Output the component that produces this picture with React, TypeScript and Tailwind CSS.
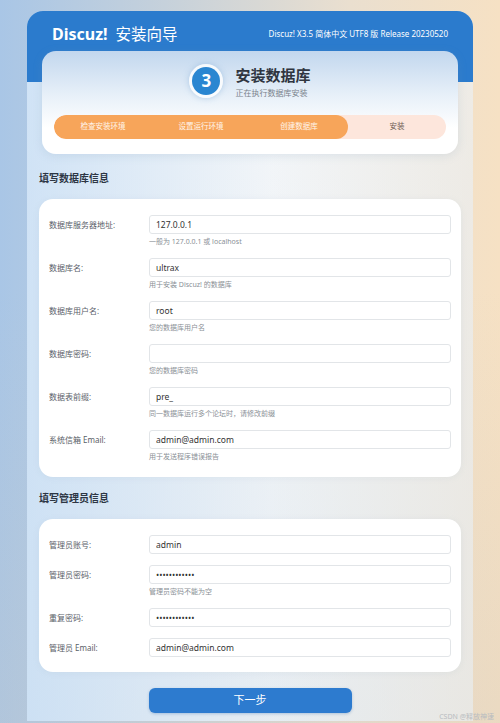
import React from 'react';

type Field = {
  label: string;
  value: string;
  hint?: string;
  password?: boolean;
};

const dbFields: Field[] = [
  { label: '数据库服务器地址:', value: '127.0.0.1', hint: '一般为 127.0.0.1 或 localhost' },
  { label: '数据库名:', value: 'ultrax', hint: '用于安装 Discuz! 的数据库' },
  { label: '数据库用户名:', value: 'root', hint: '您的数据库用户名' },
  { label: '数据库密码:', value: '', hint: '您的数据库密码' },
  { label: '数据表前缀:', value: 'pre_', hint: '同一数据库运行多个论坛时，请修改前缀' },
  { label: '系统信箱 Email:', value: 'admin@admin.com', hint: '用于发送程序错误报告' },
];

const adminFields: Field[] = [
  { label: '管理员账号:', value: 'admin' },
  { label: '管理员密码:', value: '123456789012', hint: '管理员密码不能为空', password: true },
  { label: '重复密码:', value: '123456789012', password: true },
  { label: '管理员 Email:', value: 'admin@admin.com' },
];

const steps = ['检查安装环境', '设置运行环境', '创建数据库', '安装'];

export default function App() {
  return (
    <div className="relative min-h-screen bg-[linear-gradient(180deg,rgba(255,255,255,0)_40%,rgba(200,196,188,0.25)_100%),linear-gradient(90deg,#a9c6e6_0%,#c3d0dc_30%,#eadfcf_70%,#f6e1c4_100%)] pt-[11px] font-['Noto_Sans','Noto_Sans_CJK_SC',sans-serif]">
      <div className="mx-[27px] overflow-hidden rounded-t-[16px] bg-[linear-gradient(90deg,rgba(196,220,244,0.75)_0%,rgba(232,236,240,0.2)_55%,rgba(234,228,218,0.65)_100%),linear-gradient(180deg,#f8fafc_0%,#e6edf3_100%)] pb-[8px]">
        {/* Header */}
        <div className="h-[71px] bg-[#2b7bcd] px-[25px] pt-[12px]">
          <div className="flex items-center justify-between">
            <div className="flex items-baseline gap-[8px] text-white">
              <span className="text-[16px] font-bold leading-[22px]">Discuz!</span>
              <span className="text-[15.5px] leading-[22px]">安装向导</span>
            </div>
            <span className="text-[8px] text-white">Discuz! X3.5 简体中文 UTF8 版 Release 20230520</span>
          </div>
        </div>

        {/* Step card */}
        <div className="relative mx-[15px] -mt-[31px] rounded-[14px] bg-[linear-gradient(180deg,#c2d7ee_0%,#e9f1f9_45%,#ffffff_75%)] px-[12px] pb-[15px] pt-[13px] shadow-[0_2px_10px_rgba(120,150,180,0.18)]">
          <div className="flex items-center justify-center gap-[12px]">
            <div className="flex h-[34px] w-[34px] items-center justify-center rounded-full bg-white/80 shadow-[0_0_6px_rgba(140,180,220,0.6)]">
              <div className="flex h-[28px] w-[28px] items-center justify-center rounded-full bg-[#2a86d1] text-[17px] font-bold text-white">
                3
              </div>
            </div>
            <div className="flex flex-col">
              <span className="text-[15px] font-bold leading-[20px] text-[#2f3540]">安装数据库</span>
              <span className="mt-[2px] text-[8px] leading-[11px] text-[#7a828c]">正在执行数据库安装</span>
            </div>
          </div>
          <div className="mt-[17px] grid h-[24px] grid-cols-4 overflow-hidden rounded-full bg-[#fde6dc]">
            <div className="col-span-3 grid grid-cols-3 rounded-full bg-[#f7a55a]">
              {steps.slice(0, 3).map((s) => (
                <div key={s} className="flex items-center justify-center text-[7.5px] text-white/90">
                  {s}
                </div>
              ))}
            </div>
            <div className="flex items-center justify-center text-[7.5px] text-[#6b5a52]">{steps[3]}</div>
          </div>
        </div>

        {/* Database info */}
        <h2 className="mx-[12px] mt-[18px] text-[10px] font-bold leading-[12px] text-[#2d3644]">填写数据库信息</h2>
        <FormCard fields={dbFields} />

        {/* Admin info */}
        <h2 className="mx-[12px] mt-[15px] text-[10px] font-bold leading-[12px] text-[#2d3644]">填写管理员信息</h2>
        <FormCard fields={adminFields} />

        <div className="mt-[16px] flex justify-center">
          <button className="h-[25px] w-[203px] rounded-[6px] bg-[#2d7bcf] text-[11px] text-white shadow-[0_1px_3px_rgba(40,100,170,0.3)]">
            下一步
          </button>
        </div>
      </div>

      <span className="absolute bottom-[2px] right-[6px] text-[7px] leading-[9px] text-[#b8bcc0]">CSDN @释放神速</span>
    </div>
  );
}

function FormCard({ fields }: { fields: Field[] }) {
  return (
    <div className="mx-[12px] mt-[15px] flex flex-col gap-[11px] rounded-[14px] bg-white px-[10px] pb-[15px] pt-[16px] shadow-[0_1px_6px_rgba(150,170,190,0.12)]">
      {fields.map((f) => (
        <div key={f.label} className="flex">
          <label className="flex h-[19px] w-[100px] shrink-0 items-center text-[8px] text-[#5a6068]">{f.label}</label>
          <div className="flex-1">
            <input
              readOnly
              type={f.password ? 'password' : 'text'}
              defaultValue={f.value}
              className="block h-[19px] w-full rounded-[3px] border border-[#e2e5e8] bg-white px-[6px] text-[8.5px] text-[#333] outline-none"
            />
            {f.hint && <div className="mt-[3px] h-[10px] text-[7px] leading-[10px] text-[#8a9096]">{f.hint}</div>}
          </div>
        </div>
      ))}
    </div>
  );
}
